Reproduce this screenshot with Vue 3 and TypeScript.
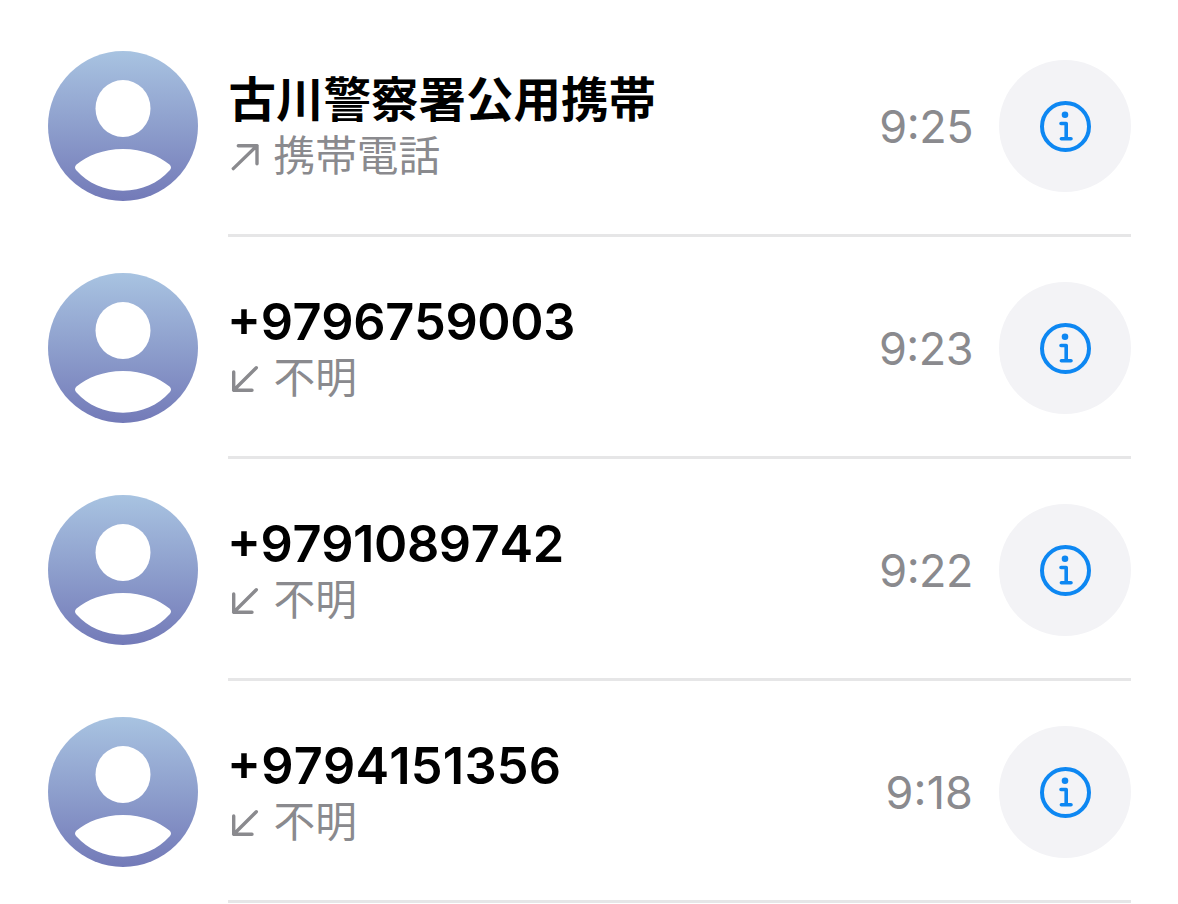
<script setup lang="ts">
interface Call {
  id: number
  name: string
  label: string
  time: string
  outgoing: boolean
  nameTracking: number
  timeTracking: number
}

const calls: Call[] = [
  { id: 1, name: '古川警察署公用携帯', label: '携帯電話', time: '9:25', outgoing: true, nameTracking: 0, timeTracking: -0.5 },
  { id: 2, name: '+9796759003', label: '不明', time: '9:23', outgoing: false, nameTracking: -0.35, timeTracking: -0.5 },
  { id: 3, name: '+9791089742', label: '不明', time: '9:22', outgoing: false, nameTracking: -0.4, timeTracking: -0.5 },
  { id: 4, name: '+9794151356', label: '不明', time: '9:18', outgoing: false, nameTracking: 0.2, timeTracking: 0.1 },
]
</script>

<template>
  <main class="recents">
    <article v-for="call in calls" :key="call.id" class="row">
      <svg class="avatar" viewBox="0 0 150 150" aria-hidden="true">
        <defs>
          <linearGradient :id="`shade-${call.id}`" x1="0" y1="0" x2="0" y2="1">
            <stop offset="0" stop-color="#a8c3e1" />
            <stop offset="1" stop-color="#737ab8" />
          </linearGradient>
        </defs>
        <circle cx="75" cy="75" r="75" :fill="`url(#shade-${call.id})`" />
        <ellipse cx="75" cy="57.500" rx="27.500" ry="28.500" fill="#fff" />
        <path
          d="M28.500 119.500C26.500 117.500 26.500 115.500 28.500 113.500C39 105 55 98 75 98S111 105 121.500 113.500C123.500 115.500 123.500 117.500 121.500 119.500C110 132 94 139.700 75 139.700S40 132 28.500 119.500Z"
          fill="#fff"
        />
      </svg>
      <div class="content">
        <div class="who">
          <div
            class="name"
            :class="{ kanji: call.outgoing }"
            :style="{ letterSpacing: `${call.nameTracking}px` }"
          >{{ call.name }}</div>
          <div class="sub">
            <svg class="arrow" viewBox="0 0 29 28" aria-hidden="true">
              <path v-if="call.outgoing" d="M3.300 25.600L27 2.700M8.300 2.700H27V20.700" />
              <path v-else d="M26.300 2.700L3.700 25.300M3.700 7V25.300H22" />
            </svg>
            <span class="label">{{ call.label }}</span>
          </div>
        </div>
        <time class="time" :style="{ letterSpacing: `${call.timeTracking}px` }">{{ call.time }}</time>
        <button class="info" type="button" aria-label="情報">
          <svg viewBox="0 0 52 52" aria-hidden="true">
            <circle class="ring" cx="26.500" cy="26.500" r="23.500" />
            <circle class="dot" cx="26" cy="14.700" r="3.300" />
            <path class="stem" d="M22 23.500H27.200V38.800M22.400 38.800H32" />
          </svg>
        </button>
      </div>
    </article>
  </main>
</template>

<style>
body {
  margin: 0;
  background: #fff;
}
</style>

<style scoped>
.recents {
  box-sizing: border-box;
  width: 1178px;
  height: 904px;
  padding: 15px 47px 0 48px;
  overflow: hidden;
  background: #fff;
  font-family: Inter, "Noto Sans CJK JP", sans-serif;
}
.row {
  display: flex;
  height: 222px;
}
.avatar {
  flex: none;
  width: 150px;
  height: 150px;
  margin: 36px 30px 0 0;
}
.content {
  box-sizing: border-box;
  display: flex;
  flex: 1;
  align-items: center;
  height: 222px;
  padding-top: 3px;
  border-bottom: 3px solid #e6e6e7;
}
.who {
  flex: 1;
  padding-top: 5px;
}
.name {
  height: 57px;
  color: #000;
  font-size: 50.5px;
  font-weight: 600;
  font-kerning: none;
  line-height: 56px;
  white-space: nowrap;
}
.name:not(.kanji) {
  margin-left: -1px;
  font-feature-settings: "case" 1;
}
.name.kanji {
  height: 57px;
  margin-left: 0.5px;
  font-size: 47.5px;
  font-weight: 700;
}
.sub {
  display: flex;
  align-items: center;
  height: 56px;
  color: #8a8a8e;
}
.arrow {
  width: 29px;
  height: 28px;
  margin: 0 14.5px 0 2px;
  fill: none;
  stroke: currentColor;
  stroke-width: 3.4;
  stroke-linecap: round;
  stroke-linejoin: round;
}
.label {
  margin-top: -2px;
  font-size: 41.7px;
  line-height: 56px;
}
.time {
  margin-right: 26px;
  color: #8a8a8e;
  font-size: 45px;
  font-kerning: none;
  font-feature-settings: "case" 1;
}
.info {
  display: flex;
  align-items: center;
  justify-content: center;
  width: 132px;
  height: 132px;
  padding: 0;
  border: 0;
  border-radius: 50%;
  background: #f3f3f6;
}
.info svg {
  width: 52px;
  height: 52px;
}
.ring,
.stem {
  fill: none;
  stroke: #0d87f2;
  stroke-width: 4;
  stroke-linecap: round;
  stroke-linejoin: round;
}
.stem {
  stroke-width: 3.6;
}
.dot {
  fill: #0d87f2;
}
</style>
